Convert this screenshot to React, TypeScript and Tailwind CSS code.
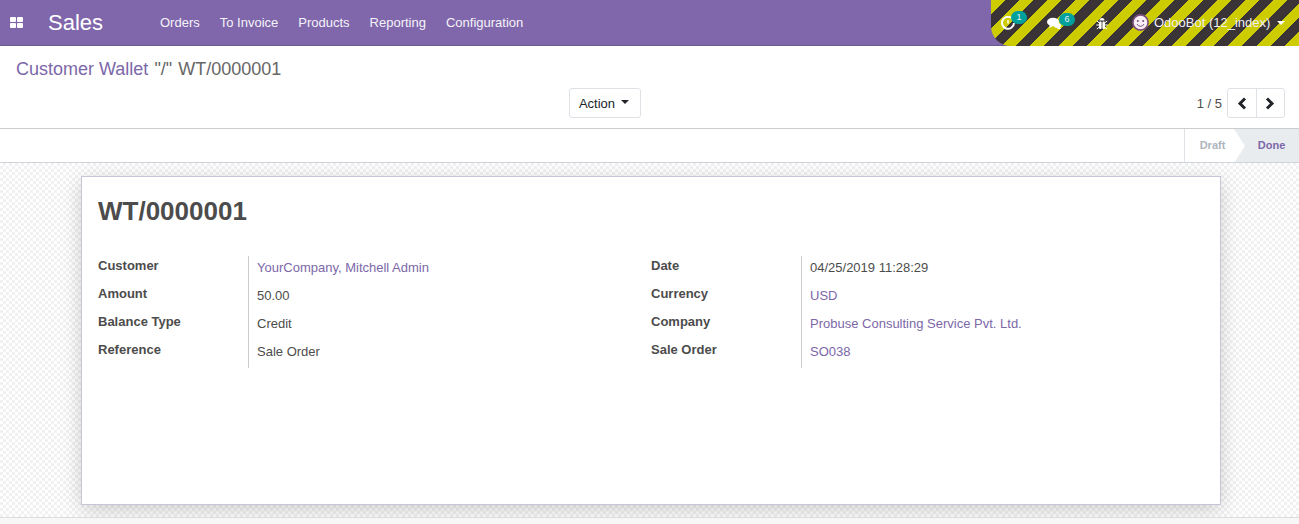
import React from "react";

const sans = "font-['Liberation_Sans',Arial,sans-serif]";

function Row({ label, value, link }: { label: string; value: string; link?: boolean }) {
  return (
    <div className="flex h-[28px]">
      <div className="w-[150px] pt-[1px] text-[13px] leading-[18px] font-bold text-[#4c4c4c] shrink-0">{label}</div>
      <div className={`border-l border-[#cccccc] pl-[8px] pt-[3px] text-[13px] leading-[18px] ${link ? "text-[#7c67a9]" : "text-[#4c4c4c]"}`}>
        {value}
      </div>
    </div>
  );
}

export default function App() {
  return (
    <div className={`${sans} w-[1299px] h-[524px] overflow-hidden flex flex-col bg-white text-[#4c4c4c]`}>
      <header className="h-[46px] shrink-0 flex bg-[#8067ab] border-b border-[#6a5a94] text-white">
        <div className="flex items-center pl-[10px] w-[48px] shrink-0">
          <svg width="13" height="11" viewBox="0 0 13 11" fill="#fff">
            <rect x="0" y="0" width="6" height="5" rx="1" />
            <rect x="7" y="0" width="6" height="5" rx="1" />
            <rect x="0" y="6" width="6" height="5" rx="1" />
            <rect x="7" y="6" width="6" height="5" rx="1" />
          </svg>
        </div>
        <div className="w-[112px] text-[22px] leading-[45px] shrink-0">Sales</div>
        <nav className="flex items-center gap-[20px] text-[13px] text-[#f5f3f9] pt-px">
          <span>Orders</span>
          <span>To Invoice</span>
          <span>Products</span>
          <span>Reporting</span>
          <span>Configuration</span>
        </nav>
        <div className="ml-auto w-[308px] h-[46px] shrink-0 flex items-center rounded-bl-[20px] bg-[repeating-linear-gradient(135deg,#cccc00,#cccc00_10px,#3a3436_10px,#3a3436_20px)] text-[13px] text-[#f0eef6]">
          <div className="relative ml-[10px] w-[13px] h-[14px] mb-[1px]">
            <svg width="14" height="14" viewBox="0 0 14 14" fill="none" stroke="#fff" strokeWidth="2">
              <path d="M12 3.5A6 6 0 1 0 13 7" />
              <path d="M7 4v3.5" strokeWidth="1.4" />
            </svg>
            <span className="absolute left-[10px] top-[-5px] h-[13px] min-w-[16px] px-[5px] rounded-full bg-[#00a09d] text-[9px] leading-[13px] text-center">1</span>
          </div>
          <div className="relative ml-[33px] w-[14px] h-[13px]">
            <svg width="15" height="13" viewBox="0 0 15 13" fill="#fff">
              <ellipse cx="6" cy="5" rx="6" ry="4.2" />
              <path d="M3 8l-1 3 4-2z" />
              <path d="M12 9.5l2 2.5h-4z" />
              <ellipse cx="10.5" cy="8.5" rx="3.5" ry="2.5" />
            </svg>
            <span className="absolute left-[12px] top-[-4px] h-[13px] min-w-[16px] px-[5px] rounded-full bg-[#00a09d] text-[9px] leading-[13px] text-center">6</span>
          </div>
          <div className="ml-[35px] w-[12px] h-[13px]">
            <svg width="12" height="13" viewBox="0 0 12 13" fill="#fff">
              <path d="M3.5 3.5a2.500 2.500 0 0 1 5 0z" />
              <rect x="3" y="4.400" width="2.600" height="7.600" rx="1" />
              <rect x="6.400" y="4.400" width="2.600" height="7.600" rx="1" />
              <path d="M.8 4l2.400 1.800M11.200 4L8.800 5.800M.3 8h2.700M11.700 8H9M.8 12l2.400-1.800M11.200 12L8.800 10.200" stroke="#fff" strokeWidth="1" />
            </svg>
          </div>
          <div className="ml-[24px] w-[17px] h-[17px] mb-[1px]">
            <svg width="17" height="17" viewBox="0 0 17 17">
              <circle cx="8.500" cy="8.500" r="7.600" fill="#f7eff5" stroke="#7c4d7e" strokeWidth="1.600" />
              <circle cx="5.800" cy="7" r="1" fill="#7c4d7e" />
              <circle cx="11.200" cy="7" r="1" fill="#7c4d7e" />
              <path d="M5 10a3.800 3.800 0 0 0 7 0" fill="none" stroke="#7c4d7e" strokeWidth="1" />
            </svg>
          </div>
          <span className="ml-[5px]">OdooBot (12_index)</span>
          <span className="ml-[7px] w-0 h-0 border-x-[4px] border-x-transparent border-t-[4px] border-t-white mb-[1px]" />
        </div>
      </header>

      <div className="h-[83px] shrink-0 border-b border-[#cccccc] flex flex-col">
        <div className="pl-[16px] pt-[10px] text-[18px] leading-[26px] text-[#666666] whitespace-pre">
          <span className="text-[#7c67a9]">Customer Wallet</span>
          <span className="ml-[6px]">"/"</span>
          <span className="ml-[6px]">WT/0000001</span>
        </div>
        <div className="relative flex items-center justify-end h-[30px] mt-[6px] pr-[14px]">
          <button className="absolute left-[569px] top-0 h-[30px] w-[72px] bg-white border border-[#dee2e6] rounded-[3px] flex items-center justify-center pr-[2px] text-[13px] text-[#212529]">
            <span className="pt-[1px]">Action</span>
            <span className="ml-[6px] mb-[3px] w-0 h-0 border-x-[4px] border-x-transparent border-t-[4px] border-t-[#212529]" />
          </button>
          <span className="text-[13px] text-[#4c4c4c] mr-[5px] pt-[2px]">1 / 5</span>
          <div className="flex h-[30px] w-[58px] border border-[#dee2e6] rounded-[3px] bg-white">
            <div className="flex-1 flex items-center justify-center border-r border-[#dee2e6]">
              <svg width="10" height="13" viewBox="0 0 10 13" fill="none" stroke="#212529" strokeWidth="3">
                <path d="M8 1.500L3 6.500l5 5" />
              </svg>
            </div>
            <div className="flex-1 flex items-center justify-center">
              <svg width="10" height="13" viewBox="0 0 10 13" fill="none" stroke="#212529" strokeWidth="3">
                <path d="M2 1.500l5 5-5 5" />
              </svg>
            </div>
          </div>
        </div>
      </div>

      <div className="h-[34px] shrink-0 border-b border-[#ced4da] flex justify-end">
        <div className="w-[50px] border-l border-[#dee2e6] flex items-center justify-center text-[11px] font-bold text-[#adb5bd] pl-[6px]">Draft</div>
        <div className="relative w-[65px] bg-[#e9ecef] flex items-center justify-center pl-[10px] text-[11px] font-bold text-[#7c67a9]">
          <span className="absolute left-0 top-0 w-0 h-0 border-y-[17px] border-y-transparent border-l-[11px] border-l-white" />
          Done
        </div>
      </div>

      <main className="flex-1 min-h-0 flex flex-col bg-[repeating-conic-gradient(#f1f1f1_0_25%,#ffffff_0_50%)] bg-[length:6px_6px]">
        <div className="ml-[81px] mr-[78px] mt-[13px] h-[329px] shrink-0 bg-white border border-[#c9c5d8] shadow-[0_5px_20px_-1px_rgba(0,0,0,0.2)] pl-[16px] pt-[18px]">
          <h1 className="text-[26px] leading-[32px] font-bold text-[#4c4c4c]">WT/0000001</h1>
          <div className="flex mt-[29px]">
            <div className="w-[553px] shrink-0">
              <Row label="Customer" value="YourCompany, Mitchell Admin" link />
              <Row label="Amount" value="50.00" />
              <Row label="Balance Type" value="Credit" />
              <Row label="Reference" value="Sale Order" />
            </div>
            <div>
              <Row label="Date" value="04/25/2019 11:28:29" />
              <Row label="Currency" value="USD" link />
              <Row label="Company" value="Probuse Consulting Service Pvt. Ltd." link />
              <Row label="Sale Order" value="SO038" link />
            </div>
          </div>
        </div>
        <div className="mt-[12px] flex-1 bg-[#f7f7f7] border-t border-[#dddddd]" />
      </main>
    </div>
  );
}
